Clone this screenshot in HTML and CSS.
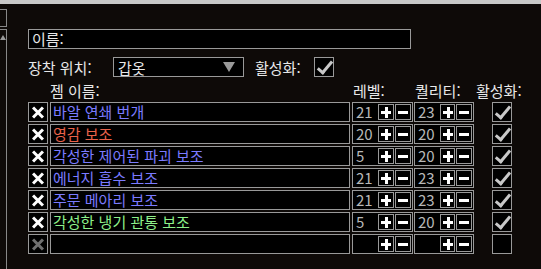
FILE: index.html
```html
<!DOCTYPE html>
<html lang="ko">
<head>
  <meta charset="UTF-8" />
  <title>젬 설정</title>
  <link rel="stylesheet" href="styles.css">
</head>
<body>
  <div class="topbar"></div>
  <div class="main">
    <div class="side">
      <div class="side-btn"></div>
      <div class="side-track"><span class="side-arrow"></span></div>
    </div>

    <div class="content">
      <div class="name-field">이름:</div>

      <div class="slot-row">
        <span class="label">장착 위치:</span>
        <div class="dropdown">
          <span>갑옷</span>
          <span class="arrow"></span>
        </div>
        <span class="label active-label">활성화:</span>
        <div class="check on"></div>
      </div>

      <div class="head-row">
        <span class="h-name">젬 이름:</span>
        <span class="h-level">레벨:</span>
        <span class="h-quality">퀄리티:</span>
        <span class="h-active">활성화:</span>
      </div>

      <!-- Gem rows -->
      <div class="gem-list">
        <div class="gem-row">
          <div class="del"></div>
          <div class="gem-name blue">바알 연쇄 번개</div>
          <div class="num lvl"><span class="val">21</span><span class="pm plus"></span><span class="pm minus"></span></div>
          <div class="num"><span class="val">23</span><span class="pm plus"></span><span class="pm minus"></span></div>
          <div class="check on"></div>
        </div>
        <div class="gem-row">
          <div class="del"></div>
          <div class="gem-name red">영감 보조</div>
          <div class="num lvl"><span class="val">20</span><span class="pm plus"></span><span class="pm minus"></span></div>
          <div class="num"><span class="val">20</span><span class="pm plus"></span><span class="pm minus"></span></div>
          <div class="check on"></div>
        </div>
        <div class="gem-row">
          <div class="del"></div>
          <div class="gem-name blue">각성한 제어된 파괴 보조</div>
          <div class="num lvl"><span class="val">5</span><span class="pm plus"></span><span class="pm minus"></span></div>
          <div class="num"><span class="val">20</span><span class="pm plus"></span><span class="pm minus"></span></div>
          <div class="check on"></div>
        </div>
        <div class="gem-row">
          <div class="del"></div>
          <div class="gem-name blue">에너지 흡수 보조</div>
          <div class="num lvl"><span class="val">21</span><span class="pm plus"></span><span class="pm minus"></span></div>
          <div class="num"><span class="val">23</span><span class="pm plus"></span><span class="pm minus"></span></div>
          <div class="check on"></div>
        </div>
        <div class="gem-row">
          <div class="del"></div>
          <div class="gem-name blue">주문 메아리 보조</div>
          <div class="num lvl"><span class="val">21</span><span class="pm plus"></span><span class="pm minus"></span></div>
          <div class="num"><span class="val">23</span><span class="pm plus"></span><span class="pm minus"></span></div>
          <div class="check on"></div>
        </div>
        <div class="gem-row">
          <div class="del"></div>
          <div class="gem-name green">각성한 냉기 관통 보조</div>
          <div class="num lvl"><span class="val">5</span><span class="pm plus"></span><span class="pm minus"></span></div>
          <div class="num"><span class="val">20</span><span class="pm plus"></span><span class="pm minus"></span></div>
          <div class="check on"></div>
        </div>
        <div class="gem-row">
          <div class="del off"></div>
          <div class="gem-name"></div>
          <div class="num lvl"><span class="val"></span><span class="pm plus"></span><span class="pm minus"></span></div>
          <div class="num"><span class="val"></span><span class="pm plus"></span><span class="pm minus"></span></div>
          <div class="check"></div>
        </div>
      </div>
    </div>
  </div>
</body>
</html>
```

FILE: styles.css
```css
body {
  margin: 0;
  background-color: #0e0a08;
  color: #e8e8e8;
  font-family: "Noto Sans CJK KR", "Noto Sans", sans-serif;
  font-size: 15px;
  height: 269px;
  overflow: hidden;
}

.topbar {
  height: 4px;
  background-color: #c8c8c8;
}

.main {
  display: flex;
  height: 265px;
}

/* left scroll strip */
.side {
  width: 7px;
  flex-shrink: 0;
}

.side-btn {
  margin-top: 5px;
  height: 16px;
  border: 1px solid #888;
  border-left: none;
}

.side-track {
  margin-top: 2px;
  height: 240px;
  border-top: 1px solid #888;
  border-right: 1px solid #888;
  position: relative;
}

.side-arrow {
  position: absolute;
  left: 0;
  top: 5px;
  border-left: 3px solid transparent;
  border-right: 3px solid transparent;
  border-bottom: 5px solid #999;
}

.content {
  padding-left: 21px;
}

.name-field {
  margin-top: 25px;
  width: 378px;
  height: 18px;
  line-height: 18px;
  padding-left: 3px;
  border: 1px solid #999;
  background-color: #000;
}

.slot-row {
  display: flex;
  align-items: center;
  margin-top: 8px;
  height: 20px;
}

.label {
  width: 85px;
}

.dropdown {
  display: flex;
  justify-content: space-between;
  align-items: center;
  width: 117px;
  height: 18px;
  padding: 0 8px 0 4px;
  border: 1px solid #999;
  background-color: #000;
}

.dropdown .arrow {
  border-left: 6px solid transparent;
  border-right: 6px solid transparent;
  border-top: 10px solid #9a9a9a;
}

.active-label {
  margin-left: 11px;
  width: 59px;
}

.check {
  position: relative;
  width: 18px;
  height: 18px;
  border: 1px solid #999;
  background-color: #000;
}

.check.on::after {
  content: "";
  position: absolute;
  left: 6px;
  top: 0;
  width: 5px;
  height: 13px;
  border-right: 3px solid #c8c8c8;
  border-bottom: 3px solid #c8c8c8;
  transform: rotate(40deg);
}

.head-row {
  display: flex;
  height: 20px;
  line-height: 20px;
  margin-top: 4px;
}

.h-name {
  margin-left: 22px;
  width: 303px;
}

.h-level {
  width: 62px;
}

.h-quality {
  width: 61px;
}

.gem-list {
  display: flex;
  flex-direction: column;
  gap: 2px;
  margin-top: 1px;
}

.gem-row {
  display: flex;
  height: 20px;
}

/* delete button: white X */
.del {
  position: relative;
  width: 18px;
  height: 18px;
  border: 1px solid #999;
  background-color: #000;
}

.del::before,
.del::after {
  content: "";
  position: absolute;
  left: 2px;
  top: 8px;
  width: 14px;
  height: 3px;
  background-color: #fff;
  transform: rotate(45deg);
}

.del::after {
  transform: rotate(-45deg);
}

.del.off::before,
.del.off::after {
  background-color: #707070;
}

.gem-name {
  margin-left: 2px;
  width: 296px;
  height: 18px;
  line-height: 18px;
  padding-left: 2px;
  border: 1px solid #999;
  background-color: #000;
  white-space: nowrap;
}

.blue {
  color: #7b7bff;
}

.red {
  color: #e8624a;
}

.green {
  color: #8ef08a;
}

.num {
  display: flex;
  margin-left: 1px;
  padding-left: 3px;
  width: 55px;
  height: 18px;
  border: 1px solid #999;
  background-color: #000;
}

.num.lvl {
  margin-left: 2px;
  width: 56px;
}

.val {
  width: 22px;
  line-height: 18px;
  color: #b8b8b8;
}

.pm {
  position: relative;
  width: 14px;
  height: 14px;
  margin-top: 1px;
  margin-right: 1px;
  border: 1px solid #999;
}

.pm::before,
.pm.plus::after {
  content: "";
  position: absolute;
  left: 2px;
  top: 6px;
  width: 10px;
  height: 3px;
  background-color: #fff;
}

.pm.plus::after {
  left: 6px;
  top: 2px;
  width: 3px;
  height: 11px;
}

.gem-row .check {
  margin-left: 18px;
}
```
